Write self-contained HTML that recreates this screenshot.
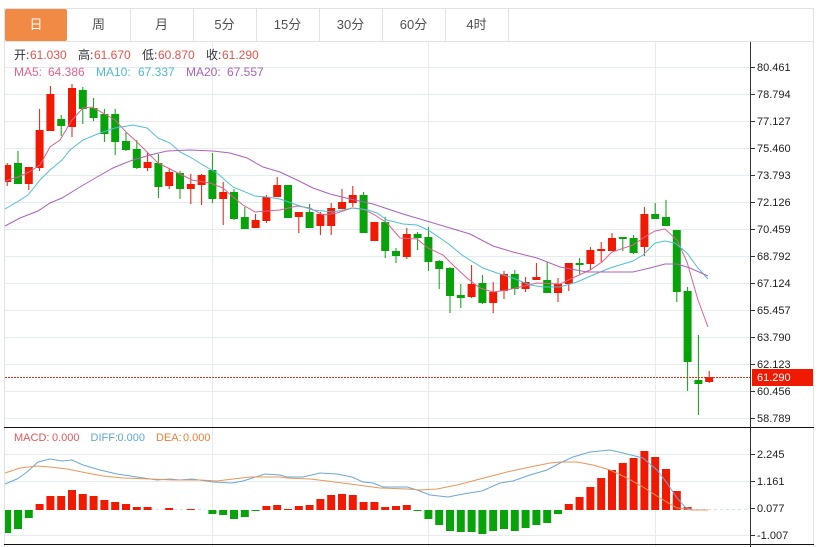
<!DOCTYPE html>
<html><head><meta charset="utf-8"><style>
html,body{margin:0;padding:0;background:#fff;width:826px;height:547px;overflow:hidden}
svg{display:block}
text{font-family:"Liberation Sans","Noto Sans CJK SC",sans-serif}
.ax{font-size:11px;fill:#222}
.tab{font-size:13px;fill:#505050;text-anchor:middle}
.lg{font-size:12px}
.md{font-size:11px}
</style></head><body>
<svg width="826" height="547" viewBox="0 0 826 547" xmlns="http://www.w3.org/2000/svg">
<!-- frame -->
<path d="M4.5 547V8.5H813.5V547M4.5 41.5H813.5" fill="none" stroke="#dfe3e6" stroke-width="1"/>
<path d="M130.5 9V41M193.5 9V41M256.5 9V41M319.5 9V41M382.5 9V41M445.5 9V41M508.5 9V41" stroke="#dfe3e6"/>
<rect x="5" y="9" width="62" height="32" rx="2" fill="#f08a45"/>
<text class="tab" x="36" y="29" style="fill:#fff">日</text>
<text class="tab" x="98.5" y="29">周</text>
<text class="tab" x="161.5" y="29">月</text>
<text class="tab" x="224.5" y="29">5分</text>
<text class="tab" x="287.5" y="29">15分</text>
<text class="tab" x="350.5" y="29">30分</text>
<text class="tab" x="413.5" y="29">60分</text>
<text class="tab" x="476.5" y="29">4时</text>
<!-- grid -->
<path d="M5 67.5H750M5 94.5H750M5 121.5H750M5 148.5H750M5 175.5H750M5 202.5H750M5 229.5H750M5 256.5H750M5 283.5H750M5 310.5H750M5 337.5H750M5 364.5H750M5 391.5H750M5 418.5H750M5 454.5H750M5 481.5H750M5 535.5H750M212.5 42V547M428.5 42V547M655.5 42V547" stroke="#e4ebf1" fill="none"/>
<path d="M150 509.5H205M690 509.5H750" stroke="#cfe3ee" stroke-dasharray="3 3"/>
<!-- wicks -->
<path fill="none" stroke="#ef1a05" stroke-width="1" d="M7.2 163V186M28.8 167V190M39.6 109V171M50.4 86V131M72 84V137M147.6 152V171M169.2 168V189M190.8 174V204M201.6 174V205M223.2 182V225M255.6 214V228M266.4 195V223M277.2 177V197M298.8 212V233M320.4 212V235M331.2 203V235M342 189V209M352.8 186V207M374.4 222V241M406.8 228V259M471.6 265V298M493.2 282V313M504 271V299M525.6 277V292M536.4 263V280M558 278V302M568.8 263V291M590.4 247V270M601.2 242V262M612 233V251M644.4 207V256M709.2 371V383"/>
<path fill="none" stroke="#08a30a" stroke-width="1" d="M18 151V184M61.2 115V136M82.8 87V124M93.6 98V121M104.4 109V142M115.2 109V155M126 132V151M136.8 140V169M158.4 154V198M180 171V199M212.4 153V203M234 189V220M244.8 207V229M288 185V218M309.6 204V228M363.6 192V233M385.2 217V258M396 248V263M417.6 232V250M428.4 227V271M439.2 260V289M450 267V313M460.8 284V308M482.4 275V304M514.8 270V295M547.2 262V293M579.6 258V274M622.8 237V251M633.6 235V254M655.2 203V219M666 200V226M676.8 230V302M687.6 287V391M698.4 335V415"/>
<!-- red bodies -->
<path fill="#f01a03" d="M5 165H11.2V182H5zM24.8 167h8V184h-8zM35.6 130h8V168h-8zM46.4 94h8V131h-8zM68 88h8V127h-8zM143.6 162h8V168h-8zM165.2 172h8V186h-8zM186.8 184h8V189h-8zM197.6 175h8V185h-8zM219.2 192h8V199h-8zM251.6 220h8V228h-8zM262.4 197h8V221h-8zM273.2 185h8V197h-8zM294.8 212h8V217h-8zM316.4 214h8V226h-8zM327.2 208h8V226h-8zM338 202h8V209h-8zM348.8 195h8V203h-8zM370.4 222h8V241h-8zM402.8 234h8V257h-8zM467.6 284h8V297h-8zM489.2 292h8V303h-8zM500 274h8V291h-8zM521.6 282h8V289h-8zM532.4 277h8V280h-8zM554 284h8V293h-8zM564.8 263h8V284h-8zM586.4 250h8V264h-8zM597.2 249h8V251h-8zM608 238h8V251h-8zM640.4 214h8V247h-8zM705.2 377h8V382h-8z"/>
<!-- green bodies -->
<path fill="#08a30a" d="M14 163h8V184h-8zM57.2 119h8V126h-8zM78.8 90h8V109h-8zM89.6 108h8V118h-8zM100.4 114h8V134h-8zM111.2 114h8V142h-8zM122 141h8V150h-8zM132.8 149h8V168h-8zM154.4 163h8V187h-8zM176 173h8V189h-8zM208.4 170h8V199h-8zM230 192h8V219h-8zM240.8 217h8V229h-8zM284 185h8V218h-8zM305.6 212h8V228h-8zM359.6 195h8V233h-8zM381.2 222h8V251h-8zM392 251h8V256h-8zM413.6 234h8V238h-8zM424.4 237h8V262h-8zM435.2 261h8V269h-8zM446 268h8V296h-8zM456.8 295h8V298h-8zM478.4 283h8V303h-8zM510.8 274h8V289h-8zM543.2 280h8V293h-8zM575.6 263h8V265h-8zM618.8 237h8V239h-8zM629.6 238h8V253h-8zM651.2 214h8V219h-8zM662 217h8V226h-8zM672.8 230h8V292h-8zM683.6 291h8V362h-8zM694.4 380h8V384h-8z"/>
<!-- MA lines -->
<polyline fill="none" stroke="#d9628f" stroke-width="1" points="5,181 18,177 29,172 40,165 50,147 60,140 72,120 83,108 92,107 103,113 115,120 126,132 137,142 147,152 158,163 170,169 180,174 192,180 210,183 223,188 233,197 243,205 255,212 267,211 280,210 297,206 310,208 323,215 337,213 352,208 363,209 375,215 387,223 400,238 417,239 428,248 443,255 453,265 467,278 480,288 493,292 507,290 520,287 537,283 560,284 577,276 590,270 602,262 612,252 633,245 643,238 655,231 665,229 677,240 687,262 698,300 708,327"/>
<polyline fill="none" stroke="#50bfd6" stroke-width="1" points="5,209 17,202 28,195 40,180 50,170 62,160 70,150 83,140 100,133 115,128 133,125 147,128 158,138 170,143 180,152 190,157 203,165 217,173 233,187 255,196 267,197 280,199 297,205 313,210 333,212 352,208 368,210 377,213 387,220 403,224 417,225 428,230 440,238 450,245 462,255 473,262 483,268 497,273 513,278 530,285 543,287 560,287 577,282 593,275 610,268 633,261 643,255 655,243 665,241 675,243 687,253 698,268 708,279"/>
<polyline fill="none" stroke="#ad62bd" stroke-width="1" points="5,226 20,218 38,211 50,203 62,198 80,187 97,177 113,168 125,163 133,160 150,155 167,151 190,150 213,151 230,153 247,158 263,167 280,172 297,180 313,188 330,194 350,199 373,204 403,214 430,222 470,234 493,246 513,252 537,258 560,267 587,272 610,272 633,272 650,268 665,264 677,264 690,268 708,276"/>
<!-- last price -->
<path d="M5 377.5H751" stroke="#d8301c" stroke-dasharray="2 1" fill="none"/>
<!-- MACD bars -->
<path fill="#08a30a" d="M5 510H11.2V533H5zM14 510h8V529h-8zM24.8 510h8V518h-8zM208.4 510h8V514h-8zM219.2 510h8V515h-8zM230 510h8V519h-8zM240.8 510h8V517h-8zM251.6 510h8V511h-8zM413.6 510h8V511h-8zM424.4 510h8V519h-8zM435.2 510h8V525h-8zM446 510h8V531h-8zM456.8 510h8V532h-8zM467.6 510h8V532h-8zM478.4 510h8V534h-8zM489.2 510h8V531h-8zM500 510h8V529h-8zM510.8 510h8V531h-8zM521.6 510h8V528h-8zM532.4 510h8V525h-8zM543.2 510h8V523h-8zM554 510h8V514h-8z"/>
<path fill="#f01a03" d="M35.6 504h8V510h-8zM46.4 496h8V510h-8zM57.2 496h8V510h-8zM68 490h8V510h-8zM78.8 494h8V510h-8zM89.6 496h8V510h-8zM100.4 500h8V510h-8zM111.2 502h8V510h-8zM122 504h8V510h-8zM132.8 507h8V510h-8zM143.6 507h8V510h-8zM165.2 508h8V510h-8zM186.8 509h8V510h-8zM262.4 506h8V510h-8zM273.2 505h8V510h-8zM284 509h8V510h-8zM294.8 506h8V510h-8zM305.6 505h8V510h-8zM316.4 499h8V510h-8zM327.2 495h8V510h-8zM338 494h8V510h-8zM348.8 495h8V510h-8zM359.6 502h8V510h-8zM370.4 502h8V510h-8zM381.2 507h8V510h-8zM392 506h8V510h-8zM402.8 505h8V510h-8zM564.8 504h8V510h-8zM575.6 497h8V510h-8zM586.4 487h8V510h-8zM597.2 478h8V510h-8zM608 470h8V510h-8zM618.8 463h8V510h-8zM629.6 458h8V510h-8zM640.4 451h8V510h-8zM651.2 457h8V510h-8zM662 469h8V510h-8zM672.8 491h8V510h-8zM683.6 507h8V510h-8z"/>
<!-- DIFF / DEA -->
<polyline fill="none" stroke="#6aa9da" stroke-width="1" points="5,484 17,479 27,472 38,462 50,459 62,461 72,460 83,465 100,470 117,474 137,477 157,480 170,479 180,480 192,479 213,482 232,483 243,481 265,474 280,475 287,477 303,477 320,473 337,474 352,477 363,482 373,483 383,487 407,487 417,490 430,495 448,497 463,494 482,491 500,483 513,481 530,475 547,470 560,463 573,457 590,452 610,450 623,453 643,458 657,470 667,483 677,498 685,507 693,510 708,510"/>
<polyline fill="none" stroke="#ec9658" stroke-width="1" points="5,473 20,468 37,466 50,467 67,469 87,473 103,476 123,478 150,479 173,480 200,480 217,481 233,479 250,477 280,477 287,478 310,479 327,481 350,484 380,488 407,489 420,490 437,489 457,485 480,479 507,472 530,467 550,463 560,462 577,462 593,465 610,470 627,478 643,487 660,498 677,508 693,510 708,510"/>
<!-- axes -->
<path d="M4 427.5H814M4 544.5H814" stroke="#111" fill="none"/>
<path d="M750.5 42V547M751 67.5h4M751 94.5h4M751 121.5h4M751 148.5h4M751 175.5h4M751 202.5h4M751 229.5h4M751 256.5h4M751 283.5h4M751 310.5h4M751 337.5h4M751 364.5h4M751 391.5h4M751 418.5h4M751 454.5h4M751 481.5h4M751 508.5h4M751 535.5h4" stroke="#333" fill="none"/>
<rect x="752" y="369" width="61" height="17" fill="#f01a03"/>
<text class="ax" x="757" y="71">80.461</text>
<text class="ax" x="757" y="98">78.794</text>
<text class="ax" x="757" y="125">77.127</text>
<text class="ax" x="757" y="152">75.460</text>
<text class="ax" x="757" y="179">73.793</text>
<text class="ax" x="757" y="206">72.126</text>
<text class="ax" x="757" y="233">70.459</text>
<text class="ax" x="757" y="260">68.792</text>
<text class="ax" x="757" y="287">67.124</text>
<text class="ax" x="757" y="314">65.457</text>
<text class="ax" x="757" y="341">63.790</text>
<text class="ax" x="757" y="368">62.123</text>
<text class="ax" x="757" y="381" style="fill:#fff">61.290</text>
<text class="ax" x="757" y="395">60.456</text>
<text class="ax" x="757" y="422">58.789</text>
<text class="ax" x="757" y="458">2.245</text>
<text class="ax" x="757" y="485">1.161</text>
<text class="ax" x="757" y="512">0.077</text>
<text class="ax" x="757" y="539">-1.007</text>
<!-- legend -->
<g class="lg">
<text x="14" y="59" fill="#333">开:</text><text x="30" y="59" fill="#e2544c">61.030</text>
<text x="78" y="59" fill="#333">高:</text><text x="94" y="59" fill="#e2544c">61.670</text>
<text x="142" y="59" fill="#333">低:</text><text x="158" y="59" fill="#e2544c">60.870</text>
<text x="206" y="59" fill="#333">收:</text><text x="222" y="59" fill="#e2544c">61.290</text>
<text x="14" y="76" fill="#e0648f">MA5:</text><text x="48" y="76" fill="#e0648f">64.386</text>
<text x="96" y="76" fill="#4fb9d2">MA10:</text><text x="138" y="76" fill="#4fb9d2">67.337</text>
<text x="186" y="76" fill="#a963ba">MA20:</text><text x="227" y="76" fill="#a963ba">67.557</text>
</g>
<g class="md">
<text x="14" y="441" fill="#e05a5a">MACD:</text><text x="52" y="441" fill="#e05a5a">0.000</text>
<text x="90.5" y="441" fill="#5fa6de">DIFF:</text><text x="117.5" y="441" fill="#5fa6de">0.000</text>
<text x="156" y="441" fill="#ee7f36">DEA:</text><text x="183" y="441" fill="#ee7f36">0.000</text>
</g>
</svg>
</body></html>
